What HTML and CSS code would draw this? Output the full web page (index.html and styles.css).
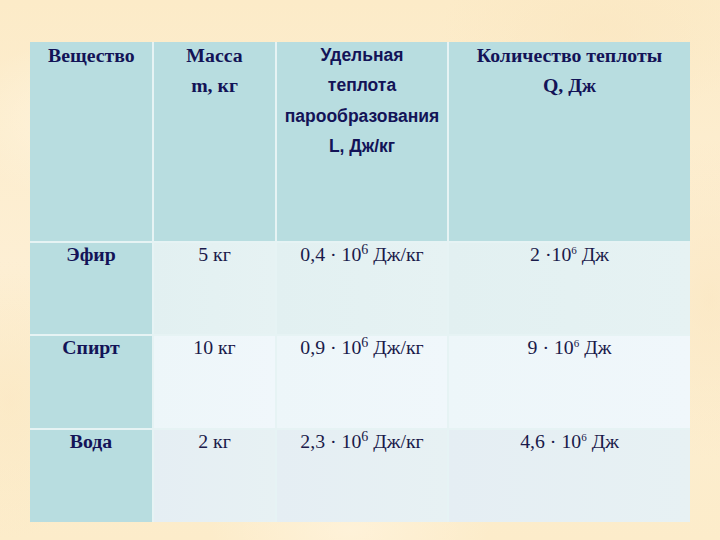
FILE: index.html
```html
<!DOCTYPE html>
<html lang="ru">
<head>
<meta charset="utf-8">
<title>Таблица</title>
<link rel="stylesheet" href="styles.css">
</head>
<body>
<div class="page">
  <div class="table">
    <div class="cell head first left"><div class="txt">Вещество</div></div>
    <div class="cell head"><div class="txt">Масса<br>m, кг</div></div>
    <div class="cell head sans"><div class="txt">Удельная<br>теплота<br>парообразования<br>L, Дж/кг</div></div>
    <div class="cell head"><div class="txt">Количество теплоты<br>Q, Дж</div></div>

    <div class="cell head first body"><div class="txt">Эфир</div></div>
    <div class="cell r1 body"><div class="txt reg">5 кг</div></div>
    <div class="cell r1 body"><div class="txt reg">0,4 · 10<sup class="big">6</sup> Дж/кг</div></div>
    <div class="cell r1 body"><div class="txt reg">2 ·10<sup class="sm">6</sup> Дж</div></div>

    <div class="cell head first body"><div class="txt">Спирт</div></div>
    <div class="cell r2 body"><div class="txt reg">10 кг</div></div>
    <div class="cell r2 body"><div class="txt reg">0,9 · 10<sup class="big">6</sup> Дж/кг</div></div>
    <div class="cell r2 body"><div class="txt reg">9 · 10<sup class="sm">6</sup> Дж</div></div>

    <div class="cell head first body"><div class="txt">Вода</div></div>
    <div class="cell r3 body"><div class="txt reg">2 кг</div></div>
    <div class="cell r3 body"><div class="txt reg">2,3 · 10<sup class="big">6</sup> Дж/кг</div></div>
    <div class="cell r3 body"><div class="txt reg">4,6 · 10<sup class="sm">6</sup> Дж</div></div>
  </div>
</div>
</body>
</html>
```
FILE: styles.css
```css
html, body {
  margin: 0;
  padding: 0;
}
body {
  width: 720px;
  height: 540px;
  overflow: hidden;
  background-color: #fcecca;
  background-image:
    radial-gradient(ellipse 120px 80px at 80px 120px, rgba(255,246,226,0.6), transparent),
    radial-gradient(ellipse 160px 90px at 600px 30px, rgba(250,230,192,0.6), transparent),
    radial-gradient(ellipse 140px 70px at 350px 530px, rgba(255,244,222,0.7), transparent),
    radial-gradient(ellipse 100px 160px at 710px 300px, rgba(250,229,190,0.6), transparent),
    radial-gradient(ellipse 90px 140px at 10px 400px, rgba(250,230,190,0.5), transparent),
    linear-gradient(180deg, #fcebc8 0%, #fdefd4 50%, #fcecca 100%);
  font-family: "Liberation Serif", "Times New Roman", serif;
}
.page {
  padding: 42px 0 0 30px;
}
.table {
  display: grid;
  grid-template-columns: 122px 121px 170px 241px;
  grid-template-rows: 199px 91px 92px 92px;
  gap: 2px;
  width: 660px;
  background: #e6f3f4;
}
.cell {
  text-align: center;
  color: #131357;
}
.txt {
  font-size: 19.8px;
  line-height: 30.3px;
  font-weight: bold;
  margin-top: -2px;
}
.body .txt {
  margin-top: -4px;
}
.txt.reg {
  font-weight: normal;
  color: #1a1a4a;
}
.head {
  background: #b8dde0;
}
.left {
  text-align: left;
  padding-left: 18px;
}
.sans .txt {
  font-family: "Liberation Sans", Arial, sans-serif;
  font-size: 17.5px;
}
.r1 {
  background: linear-gradient(90deg, #e2f0f1, #e6f2f3);
}
.r2 {
  background: linear-gradient(90deg, #edf6f9, #f0f7fb);
}
.r3 {
  background: linear-gradient(90deg, #e5eef3, #e7f1f3);
}
sup {
  line-height: 0;
  position: relative;
  vertical-align: baseline;
}
sup.big {
  font-size: 14px;
  top: -7px;
}
sup.sm {
  font-size: 11px;
  top: -7px;
}
```
